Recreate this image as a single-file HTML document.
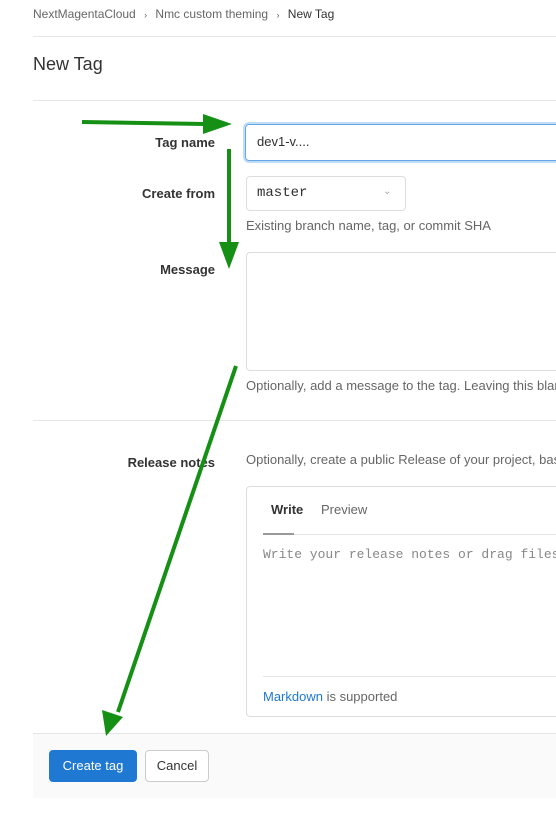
<!DOCTYPE html>
<html><head><style>
html,body{margin:0;padding:0}
body{width:556px;height:825px;overflow:hidden;background:#fff;font-family:"Liberation Sans",sans-serif;color:#303030}
#w{position:relative;width:556px;height:825px;overflow:hidden}
.a{position:absolute;white-space:nowrap}
.hr{position:absolute;left:33px;right:0;height:1px;background:#e5e5e5}
.lbl{position:absolute;right:341px;font-size:13px;font-weight:bold;color:#333}
.help{position:absolute;left:246px;font-size:13px;color:#666;white-space:nowrap}
.mono{font-family:"Liberation Mono",monospace}
</style></head><body><div id="w">
<div class="a" style="left:33px;top:7px;font-size:12px;color:#666">NextMagentaCloud <span style="margin:0 5px;font-size:9px">&#x203A;</span> Nmc custom theming <span style="margin:0 5px;font-size:9px">&#x203A;</span> <span style="color:#333">New Tag</span></div>
<div class="hr" style="top:36px"></div>
<div class="a" style="left:33px;top:54px;font-size:18px;color:#333">New Tag</div>
<div class="hr" style="top:100px"></div>

<div class="lbl" style="top:135px">Tag name</div>
<div class="a" style="left:245px;top:124px;width:330px;height:35px;border:1px solid #63a6e9;border-radius:4px;box-shadow:0 0 0 2px #c3dcf5"></div>
<div class="a" style="left:257px;top:134px;font-size:13px">dev1-v....</div>

<div class="lbl" style="top:186px">Create from</div>
<div class="a" style="left:246px;top:176px;width:158px;height:33px;border:1px solid #ddd;border-radius:4px"></div>
<div class="a mono" style="left:257px;top:185px;font-size:14px">master</div>
<div class="a" style="left:383px;top:186px;font-size:10px;color:#aaa">&#x2304;</div>
<div class="help" style="top:218px">Existing branch name, tag, or commit SHA</div>

<div class="lbl" style="top:262px">Message</div>
<div class="a" style="left:246px;top:252px;width:330px;height:117px;border:1px solid #ddd;border-radius:4px"></div>
<div class="help" style="top:378px">Optionally, add a message to the tag. Leaving this blank</div>
<div class="hr" style="top:420px"></div>

<div class="lbl" style="top:455px">Release notes</div>
<div class="help" style="top:452px">Optionally, create a public Release of your project, based on this tag.</div>
<div class="a" style="left:246px;top:486px;width:330px;height:229px;border:1px solid #ddd;border-radius:4px"></div>
<div class="a" style="left:271px;top:502px;font-size:13px;color:#333;font-weight:bold">Write</div>
<div class="a" style="left:321px;top:502px;font-size:13px;color:#666">Preview</div>
<div class="a" style="left:263px;top:534px;width:300px;height:1px;background:#e5e5e5"></div>
<div class="a" style="left:263px;top:533px;width:31px;height:2px;background:#999"></div>
<div class="a mono" style="left:263px;top:547px;font-size:13px;color:#888">Write your release notes or drag files here…</div>
<div class="a" style="left:263px;top:676px;width:300px;height:1px;background:#e5e5e5"></div>
<div class="a" style="left:263px;top:689px;font-size:13px;color:#666"><span style="color:#1f78d1">Markdown</span> is supported</div>

<div class="a" style="left:33px;top:733px;right:0;height:64px;background:#fafafa;border-top:1px solid #e5e5e5"></div>
<div class="a" style="left:49px;top:750px;width:88px;height:32px;background:#1f78d1;border-radius:4px;color:#fff;font-size:13px;line-height:32px;text-align:center">Create tag</div>
<div class="a" style="left:145px;top:750px;width:62px;height:30px;border:1px solid #ccc;background:#fff;border-radius:4px;color:#333;font-size:13px;line-height:30px;text-align:center">Cancel</div>

<svg class="a" style="left:0;top:0" width="556" height="825">
<g fill="#159015" stroke="#159015">
<line x1="82" y1="122" x2="205" y2="124" stroke-width="4"/>
<polygon points="203,114 232,124 203,134" stroke="none"/>
<line x1="229" y1="149" x2="229" y2="245" stroke-width="4"/>
<polygon points="219,242 239,242 229,269" stroke="none"/>
<line x1="236" y1="366" x2="118" y2="712" stroke-width="4"/>
<polygon points="102,710 123,717 106,736" stroke="none"/>
</g>
</svg>
</div></body></html>
